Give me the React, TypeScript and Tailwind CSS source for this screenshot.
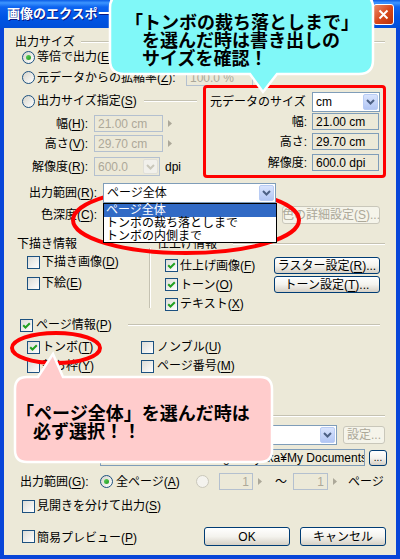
import React from "react";

function Key({ t, k, colon, dots }: { t: string; k: string; colon?: boolean; dots?: boolean }) {
  return (
    <span>
      {t}(<span className="underline underline-offset-[2px]">{k}</span>){colon ? ":" : ""}
      {dots ? "..." : ""}
    </span>
  );
}

function Radio({ checked, disabled }: { checked?: boolean; disabled?: boolean }) {
  return (
    <span
      className={`relative block w-[13px] h-[13px] shrink-0 rounded-full border ${
        disabled ? "border-[#CAC8BB] bg-[#F4F3EE]" : "border-[#1C5180] bg-linear-to-br from-[#D6D4CA] to-white"
      }`}
    >
      {checked && (
        <span className="absolute left-[3px] top-[3px] w-[5px] h-[5px] rounded-full bg-linear-to-br from-[#5BD15A] to-[#1F9A1F]" />
      )}
    </span>
  );
}

function Check({ checked }: { checked?: boolean }) {
  return (
    <span className="flex w-[13px] h-[13px] shrink-0 items-center justify-center border border-[#1C5180] bg-linear-to-br from-[#DCDCD7] to-white">
      {checked && (
        <svg width="9" height="9" viewBox="0 0 9 9">
          <path d="M1.2 4.2 L3.5 6.5 L7.8 2.2" fill="none" stroke="#21A121" strokeWidth="2" />
        </svg>
      )}
    </span>
  );
}

function Btn({ children, className = "", disabled }: { children: React.ReactNode; className?: string; disabled?: boolean }) {
  return (
    <div
      className={`flex shrink-0 items-center justify-center rounded-[3px] border ${
        disabled
          ? "border-[#C9C7BA] bg-[#F5F4EA] text-[#ACA899]"
          : "border-[#003C74] bg-linear-to-b from-white via-[#F4F3EE] to-[#D6D0C5] text-black"
      } ${className}`}
    >
      {children}
    </div>
  );
}

function DropBtn({ disabled }: { disabled?: boolean }) {
  return (
    <span
      className={`flex w-[15px] shrink-0 items-center justify-center rounded-[2px] border ${
        disabled ? "border-[#E0DFD8] bg-[#F1F0EB]" : "border-[#B9CCF4] bg-linear-to-b from-[#D9E4FD] to-[#B2C6F4]"
      }`}
    >
      <svg width="9" height="6" viewBox="0 0 9 6">
        <path d="M1 1 L4.5 4.5 L8 1" fill="none" stroke={disabled ? "#C9C7BA" : "#4D6185"} strokeWidth="2" />
      </svg>
    </span>
  );
}

function Combo({ text, className = "", disabled, children }: { text: string; className?: string; disabled?: boolean; children?: React.ReactNode }) {
  return (
    <div
      className={`relative flex shrink-0 items-stretch border p-[1px] ${
        disabled ? "border-[#B4C0CF] bg-[#ECE9D8] text-[#ACA899]" : "border-[#7F9DB9] bg-white"
      } ${className}`}
    >
      <span className="flex flex-1 items-center pl-[2px] overflow-hidden">{text}</span>
      <DropBtn disabled={disabled} />
      {children}
    </div>
  );
}

function Field({ v, className = "", disabled, right }: { v: string; className?: string; disabled?: boolean; right?: boolean }) {
  return (
    <div
      className={`flex shrink-0 items-center border px-[3px] overflow-hidden ${right ? "justify-end" : ""} ${
        disabled ? "border-[#B4C0CF] bg-[#ECE9D8] text-[#ACA899]" : "border-[#7F9DB9] bg-[#ECE9D8]"
      } ${className}`}
    >
      {v}
    </div>
  );
}

function Arrow() {
  return (
    <svg width="4" height="7" viewBox="0 0 4 7" className="shrink-0">
      <path d="M0 0 L4 3.5 L0 7Z" fill="#ACA899" />
    </svg>
  );
}

function GLine({ className = "" }: { className?: string }) {
  return <span className={`block h-[2px] border-t border-b border-t-[#C5C2B2] border-b-white ${className}`} />;
}

export default function App() {
  return (
    <div className="relative w-[400px] h-[559px] overflow-hidden bg-[#0845D8] font-['Liberation_Sans','Noto_Sans_CJK_JP',sans-serif] text-[12px] leading-[14px] text-black whitespace-nowrap">
      {/* title bar */}
      <div className="flex h-[28px] items-center pl-[7px] bg-[linear-gradient(to_bottom,#0A5CE6_0%,#3D95FF_10%,#0D64F0_25%,#0055E5_60%,#004FD9_100%)]">
        <span className="font-bold text-[13px] text-white [text-shadow:1px_1px_#0A1883]">画像のエクスポート</span>
        <span className="ml-auto mr-[6px] flex w-[21px] h-[21px] items-center justify-center rounded-[3px] border border-white bg-linear-to-br from-[#E88A66] via-[#D9491C] to-[#B8320A]">
          <svg width="11" height="11" viewBox="0 0 11 11">
            <path d="M1.5 1.5 L9.5 9.5 M9.5 1.5 L1.5 9.5" stroke="white" strokeWidth="2" />
          </svg>
        </span>
      </div>

      {/* dialog body */}
      <div className="mx-[4px] h-[527px] bg-[#ECE9D8] flex flex-col">
        {/* 出力サイズ */}
        <div className="mt-[7px] h-[14px] flex items-center pl-[11px] pr-[11px]">
          <span>出力サイズ</span>
          <GLine className="ml-[6px] flex-1" />
        </div>
        <div className="h-[16px] flex items-center pl-[18px] gap-[2px]">
          <Radio checked />
          <Key t="等倍で出力" k="E" />
        </div>
        <div className="mt-[5px] h-[15px] flex items-center pl-[18px]">
          <Radio />
          <span className="ml-[2px] w-[149px]">
            <Key t="元データからの拡縮率" k="Z" colon />
          </span>
          <Field v="100.0 %" disabled className="w-[67px] h-[17px]" />
        </div>

        <div className="flex h-[93px]">
          <div className="w-[199px] flex flex-col">
            <div className="mt-[8px] h-[16px] flex items-center pl-[18px] pr-[6px]">
              <Radio />
              <span className="ml-[2px]">
                <Key t="出力サイズ指定" k="S" />
              </span>
              <GLine className="ml-[7px] flex-1" />
            </div>
            <div className="mt-[6px] h-[17px] flex items-center">
              <span className="w-[84px] text-right">
                <Key t="幅" k="H" colon />
              </span>
              <Field v="21.00 cm" disabled className="ml-[6px] w-[69px] h-[17px]" />
              <span className="ml-[5px]">
                <Arrow />
              </span>
            </div>
            <div className="mt-[3px] h-[17px] flex items-center">
              <span className="w-[84px] text-right">
                <Key t="高さ" k="V" colon />
              </span>
              <Field v="29.70 cm" disabled className="ml-[6px] w-[69px] h-[17px]" />
              <span className="ml-[5px]">
                <Arrow />
              </span>
            </div>
            <div className="mt-[5px] h-[19px] flex items-center">
              <span className="w-[84px] text-right">
                <Key t="解像度" k="R" colon />
              </span>
              <Combo text="600.0" disabled className="ml-[6px] w-[66px] h-[19px]" />
              <span className="ml-[5px]">dpi</span>
            </div>
          </div>

          {/* 元データのサイズ (red frame) */}
          <div className="w-[183px] h-[93px] border-[3px] border-[#FF0000] rounded-[4px] flex flex-col">
            <div className="mt-[4px] h-[20px] flex items-center pr-[3px]">
              <span className="pl-[4px] flex-1">元データのサイズ</span>
              <Combo text="cm" className="w-[68px] h-[20px]" />
            </div>
            <div className="mt-[1px] h-[17px] flex items-center">
              <span className="w-[101px] text-right">幅:</span>
              <Field v="21.00 cm" className="ml-[5px] w-[67px] h-[17px]" />
            </div>
            <div className="mt-[3px] h-[17px] flex items-center">
              <span className="w-[101px] text-right">高さ:</span>
              <Field v="29.70 cm" className="ml-[5px] w-[67px] h-[17px]" />
            </div>
            <div className="mt-[4px] h-[17px] flex items-center">
              <span className="w-[101px] text-right">解像度:</span>
              <Field v="600.0 dpi" className="ml-[5px] w-[67px] h-[17px]" />
            </div>
          </div>
        </div>

        {/* 出力範囲 / 色深度 */}
        <div className="mt-[5px] h-[20px] flex items-center relative z-10">
          <span className="w-[93px] text-right">
            <Key t="出力範囲" k="R" colon />
          </span>
          <Combo text="ページ全体" className="ml-[6px] w-[173px] h-[20px]">
            <div className="absolute left-[-1px] top-[19px] w-[174px] h-[40px] bg-white border border-black flex flex-col leading-[13px]">
              <div className="h-[13px] bg-[#316AC5] text-white pl-[2px]">ページ全体</div>
              <div className="h-[13px] pl-[2px]">トンボの裁ち落としまで</div>
              <div className="h-[12px] pl-[2px]">トンボの内側まで</div>
            </div>
          </Combo>
        </div>
        <div className="mt-[2px] h-[20px] flex items-center">
          <span className="w-[93px] text-right">
            <Key t="色深度" k="C" colon />
          </span>
          <Combo text="フルカラー" className="ml-[6px] w-[173px] h-[20px]" />
          <Btn disabled className="ml-[6px] w-[98px] h-[18px]">
            <Key t="色の詳細設定" k="S" dots />
          </Btn>
        </div>

        {/* 下描き情報 / 仕上げ情報 */}
        <div className="mt-[12px] flex h-[76px]">
          <div className="w-[145px] flex flex-col">
            <div className="h-[13px] flex items-center pl-[13px]">下描き情報</div>
            <div className="mt-[4px] h-[16px] flex items-center gap-[2px] pl-[23px]">
              <Check />
              <Key t="下描き画像" k="D" />
            </div>
            <div className="mt-[5px] h-[16px] flex items-center gap-[2px] pl-[23px]">
              <Check />
              <Key t="下絵" k="E" />
            </div>
          </div>
          <span className="mt-[11px] h-[60px] w-[2px] border-l border-r border-l-[#C5C2B2] border-r-white" />
          <div className="flex-1 flex flex-col">
            <div className="h-[13px] flex items-center pl-[6px] pr-[11px]">
              <span>仕上げ情報</span>
              <GLine className="ml-[16px] flex-1" />
            </div>
            <div className="mt-[7px] h-[17px] flex items-center pl-[14px] pr-[16px]">
              <Check checked />
              <span className="ml-[2px]">
                <Key t="仕上げ画像" k="F" />
              </span>
              <Btn className="ml-auto w-[106px] h-[17px]">
                <Key t="ラスター設定" k="R" dots />
              </Btn>
            </div>
            <div className="mt-[2px] h-[17px] flex items-center pl-[14px] pr-[16px]">
              <Check checked />
              <span className="ml-[2px]">
                <Key t="トーン" k="O" />
              </span>
              <Btn className="ml-auto w-[106px] h-[17px]">
                <Key t="トーン設定" k="T" dots />
              </Btn>
            </div>
            <div className="mt-[3px] h-[16px] flex items-center pl-[14px]">
              <Check checked />
              <span className="ml-[2px]">
                <Key t="テキスト" k="X" />
              </span>
            </div>
          </div>
        </div>

        {/* ページ情報 */}
        <div className="mt-[4px] h-[16px] flex items-center pl-[16px] pr-[16px]">
          <Check checked />
          <span className="ml-[3px] w-[92px]">
            <Key t="ページ情報" k="P" />
          </span>
          <GLine className="flex-1" />
        </div>
        <div className="mt-[6px] h-[16px] flex items-center pl-[23px]">
          <span className="w-[114px] flex items-center gap-[2px]">
            <Check checked />
            <Key t="トンボ" k="T" />
          </span>
          <span className="flex items-center gap-[3px]">
            <Check />
            <Key t="ノンブル" k="U" />
          </span>
        </div>
        <div className="mt-[3px] h-[16px] flex items-center pl-[23px]">
          <span className="w-[114px] flex items-center gap-[2px]">
            <Check />
            <Key t="裁ち枠" k="Y" />
          </span>
          <span className="flex items-center gap-[3px]">
            <Check />
            <Key t="ページ番号" k="M" />
          </span>
        </div>
        <div className="mt-[5px] h-[16px] flex items-center pl-[23px]">
          <span className="w-[114px] flex items-center gap-[2px]">
            <Check />
            <Key t="作品情報" k="I" />
          </span>
          <span className="flex items-center gap-[3px]">
            <Check />
            <Key t="ファイル名を出力" k="L" />
          </span>
        </div>

        {/* 出力形式 */}
        <div className="mt-[15px] h-[12px] flex items-center pl-[13px] pr-[11px]">
          <span>出力形式</span>
          <GLine className="ml-[6px] flex-1" />
        </div>
        <div className="mt-[3px] h-[20px] flex items-center">
          <span className="w-[84px] text-right">
            <Key t="形式" k="K" colon />
          </span>
          <Combo text="ビットマップ (*.bmp)" className="ml-[12px] w-[237px] h-[20px]" />
          <Btn disabled className="ml-[6px] w-[42px] h-[18px]">
            設定...
          </Btn>
        </div>
        <div className="mt-[4px] h-[17px] flex items-center">
          <span className="w-[84px]" />
          <div className="ml-[12px] w-[265px] h-[17px] border border-[#7F9DB9] bg-[#ECE9D8] flex items-center justify-end overflow-hidden pr-[1px]">
            <span className="mr-[-4px]">C:¥Documents and Settings¥sayaka¥My Documents</span>
          </div>
          <Btn className="ml-[4px] w-[18px] h-[16px] text-[10px]">...</Btn>
        </div>

        {/* 出力範囲 pages */}
        <div className="mt-[7px] h-[17px] flex items-center pl-[16px]">
          <span className="w-[80px]">
            <Key t="出力範囲" k="G" colon />
          </span>
          <Radio checked />
          <span className="ml-[3px] w-[80px]">
            <Key t="全ページ" k="A" />
          </span>
          <Radio disabled />
          <Field v="1" disabled right className="ml-[10px] w-[34px] h-[17px]" />
          <span className="ml-[5px]">
            <Arrow />
          </span>
          <span className="ml-[13px] w-[12px]">〜</span>
          <Field v="1" disabled right className="ml-[6px] w-[35px] h-[17px]" />
          <span className="ml-[5px]">
            <Arrow />
          </span>
          <span className="ml-[11px]">ページ</span>
        </div>
        <div className="mt-[8px] h-[16px] flex items-center gap-[2px] pl-[18px]">
          <Check />
          <Key t="見開きを分けて出力" k="S" />
        </div>
        <div className="mt-[13px] h-[19px] flex items-center pl-[18px] pr-[10px]">
          <Check />
          <span className="ml-[2px] mt-[3px]">
            <Key t="簡易プレビュー" k="P" />
          </span>
          <Btn className="ml-auto w-[86px] h-[19px]">OK</Btn>
          <Btn className="ml-[10px] w-[86px] h-[19px]">キャンセル</Btn>
        </div>
      </div>

      {/* annotations: red ellipses and callouts */}
      <svg className="absolute left-0 top-0 pointer-events-none" width="400" height="559" viewBox="0 0 400 559">
        <ellipse cx="186" cy="220" rx="113" ry="33" fill="none" stroke="#FF0000" strokeWidth="4" />
        <ellipse cx="56" cy="348" rx="44" ry="15" fill="none" stroke="#FF0000" strokeWidth="4" />
        <path
          d="M124,-6 H359 Q373,-6 373,8 V60 Q373,74 359,74 H277 L263,92 L250,74 H124 Q110,74 110,60 V8 Q110,-6 124,-6 Z"
          fill="#80F8F8"
          stroke="white"
          strokeWidth="2.5"
        />
        <path
          d="M27,377 H38 L53,354 L63,377 H260 Q272,377 272,389 V450 Q272,462 260,462 H27 Q15,462 15,450 V389 Q15,377 27,377 Z"
          fill="#FFCCCC"
          stroke="white"
          strokeWidth="2.5"
        />
      </svg>

      <div className="absolute left-[125px] top-[12px] font-['Noto_Sans_CJK_JP',sans-serif] font-bold text-[18px] leading-[18px]">
        <div>「トンボの裁ち落としまで」</div>
        <div className="pl-[17px]">を選んだ時は書き出しの</div>
        <div className="pl-[17px]">サイズを確認！</div>
      </div>
      <div className="absolute left-[16px] top-[403px] font-['Noto_Sans_CJK_JP',sans-serif] font-bold text-[18px] leading-[18px]">
        <div>「ページ全体」を選んだ時は</div>
        <div className="pl-[17px]">必ず選択！！</div>
      </div>
    </div>
  );
}
